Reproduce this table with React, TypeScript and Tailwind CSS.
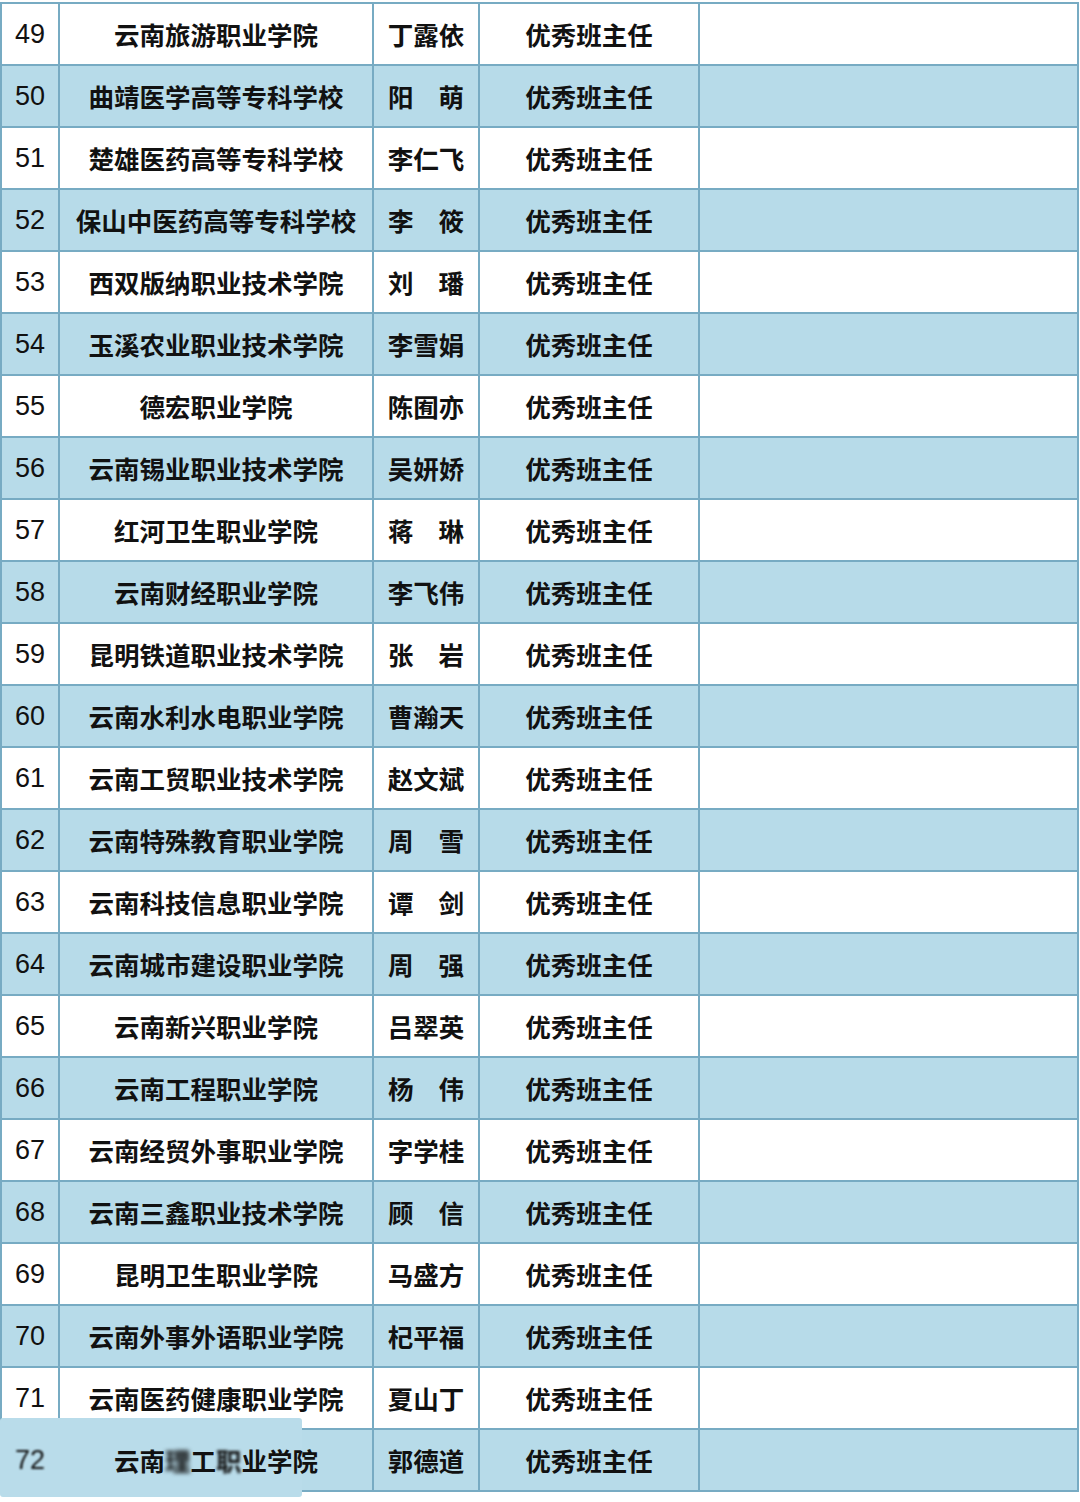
import React from "react";

type Row = { no: number; school: React.ReactNode; name: string };

const rows: Row[] = [
  { no: 49, school: "云南旅游职业学院", name: "丁露依" },
  { no: 50, school: "曲靖医学高等专科学校", name: "阳萌" },
  { no: 51, school: "楚雄医药高等专科学校", name: "李仁飞" },
  { no: 52, school: "保山中医药高等专科学校", name: "李筱" },
  { no: 53, school: "西双版纳职业技术学院", name: "刘璠" },
  { no: 54, school: "玉溪农业职业技术学院", name: "李雪娟" },
  { no: 55, school: "德宏职业学院", name: "陈囿亦" },
  { no: 56, school: "云南锡业职业技术学院", name: "吴妍娇" },
  { no: 57, school: "红河卫生职业学院", name: "蒋琳" },
  { no: 58, school: "云南财经职业学院", name: "李飞伟" },
  { no: 59, school: "昆明铁道职业技术学院", name: "张岩" },
  { no: 60, school: "云南水利水电职业学院", name: "曹瀚天" },
  { no: 61, school: "云南工贸职业技术学院", name: "赵文斌" },
  { no: 62, school: "云南特殊教育职业学院", name: "周雪" },
  { no: 63, school: "云南科技信息职业学院", name: "谭剑" },
  { no: 64, school: "云南城市建设职业学院", name: "周强" },
  { no: 65, school: "云南新兴职业学院", name: "吕翠英" },
  { no: 66, school: "云南工程职业学院", name: "杨伟" },
  { no: 67, school: "云南经贸外事职业学院", name: "字学桂" },
  { no: 68, school: "云南三鑫职业技术学院", name: "顾信" },
  { no: 69, school: "昆明卫生职业学院", name: "马盛方" },
  { no: 70, school: "云南外事外语职业学院", name: "杞平福" },
  { no: 71, school: "云南医药健康职业学院", name: "夏山丁" },
  {
    no: 72,
    school: (
      <>
        云南<span className="blur-[2px]">理</span>工<span className="blur-[1.5px]">职</span>业学院
      </>
    ),
    name: "郭德道",
  },
];

function Name({ name }: { name: string }) {
  if (name.length === 2) {
    return (
      <span className="mx-auto flex w-[76px] justify-between">
        <span>{name[0]}</span>
        <span>{name[1]}</span>
      </span>
    );
  }
  return <span>{name}</span>;
}

const cell = "border-2 border-[#77abc3] p-0 text-center";

export default function App() {
  return (
    <div
      className="relative h-[1502px] w-[1080px] bg-white pt-[2px] text-[#111]"
      style={{ fontFamily: '"Noto Sans CJK SC", "Noto Sans", sans-serif' }}
    >
      <table className="w-[1079px] table-fixed border-collapse">
        <colgroup>
          <col className="w-[58px]" />
          <col className="w-[314px]" />
          <col className="w-[106px]" />
          <col className="w-[220px]" />
          <col />
        </colgroup>
        <tbody>
          {rows.map((r, i) => (
            <tr key={r.no} className={`h-[62px] ${i % 2 === 1 ? "bg-[#b7dbe9]" : "bg-white"}`}>
              <td className={cell}>
                <span
                  className={`relative z-10 text-[27px] ${r.no === 72 ? "blur-[1px]" : ""}`}
                  style={{ fontFamily: '"Liberation Sans", Arial, sans-serif' }}
                >
                  {r.no}
                </span>
              </td>
              <td className={`${cell} text-[25.5px] font-bold`}>
                <span className="relative z-10">{r.school}</span>
              </td>
              <td className={`${cell} text-[25.5px] font-bold`}>
                <Name name={r.name} />
              </td>
              <td className={`${cell} text-[25.5px] font-bold`}>优秀班主任</td>
              <td className={cell} />
            </tr>
          ))}
        </tbody>
      </table>
      {/* watermark patch over the last row */}
      <div className="absolute left-0 top-[1418px] h-[79px] w-[302px] rounded-[3px] bg-[#b9dcea]" />
    </div>
  );
}
